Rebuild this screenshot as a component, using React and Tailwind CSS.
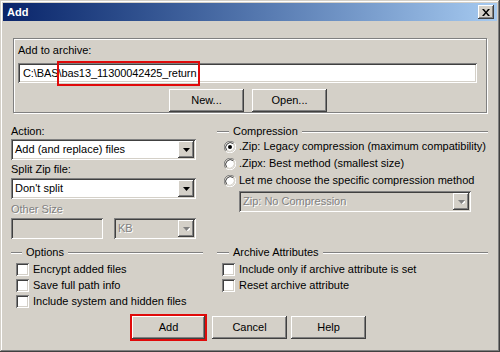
const raised =
  'shadow-[inset_-1px_-1px_#404040,inset_1px_1px_#ffffff,inset_-2px_-2px_#808080,inset_2px_2px_#d4d0c8]';
const sunken =
  'shadow-[inset_1px_1px_#808080,inset_-1px_-1px_#ffffff,inset_2px_2px_#404040,inset_-2px_-2px_#d4d0c8]';
const grayText = 'text-[#808080] [text-shadow:1px_1px_0_#ffffff]';

function Arrow({ disabled }) {
  return (
    <div className={`flex h-[17px] w-[16px] shrink-0 items-center justify-center bg-[#d4d0c8] ${raised}`}>
      <svg width="7" height="4" viewBox="0 0 7 4">
        {disabled && <path d="M1 1h7L4.5 5z" fill="#ffffff" />}
        <path d="M0 0h7L3.5 4z" fill={disabled ? '#808080' : '#000000'} />
      </svg>
    </div>
  );
}

function Select({ value, className, disabled }) {
  return (
    <div
      className={`flex h-[21px] items-center p-[2px] ${sunken} ${disabled ? 'bg-[#d4d0c8]' : 'bg-white'} ${className}`}
    >
      <span className={`flex-1 truncate pl-[2px] ${disabled ? grayText : ''}`}>{value}</span>
      <Arrow disabled={disabled} />
    </div>
  );
}

function Button({ children, className }) {
  return (
    <div className={`flex h-[23px] items-center justify-center bg-[#d4d0c8] ${raised} ${className}`}>
      {children}
    </div>
  );
}

function Header({ label, lead }) {
  return (
    <div className="flex h-[13px] items-center">
      <div className={`h-[2px] border-t border-b border-t-[#808080] border-b-white ${lead}`} />
      <span className="px-[4px]">{label}</span>
      <div className="h-[2px] flex-1 border-t border-b border-t-[#808080] border-b-white" />
    </div>
  );
}

function Radio({ checked, label }) {
  return (
    <div className="flex h-[17px] items-center pl-[7px]">
      <svg width="12" height="12" viewBox="0 0 12 12" className="shrink-0">
        <path d="M10.24 1.76A6 6 0 0 0 1.76 10.24" stroke="#808080" fill="none" />
        <path d="M1.76 10.24A6 6 0 0 0 10.24 1.76" stroke="#ffffff" fill="none" />
        <circle cx="6" cy="6" r="4.6" fill="#ffffff" />
        <path d="M9.3 2.7A4.7 4.7 0 0 0 2.7 9.3" stroke="#404040" fill="none" />
        <path d="M2.7 9.3A4.7 4.7 0 0 0 9.3 2.7" stroke="#d4d0c8" fill="none" />
        {checked && <circle cx="6" cy="6" r="2" fill="#000000" />}
      </svg>
      <span className="pl-[3px]">{label}</span>
    </div>
  );
}

function Check({ label }) {
  return (
    <div className="flex h-[16px] items-center pl-[5px]">
      <div className={`h-[13px] w-[13px] shrink-0 bg-white ${sunken}`} />
      <span className="pl-[4px]">{label}</span>
    </div>
  );
}

export default function App() {
  return (
    <div
      className={`h-[352px] w-[500px] overflow-hidden bg-[#d4d0c8] font-['Liberation_Sans',Arial,sans-serif] text-[11px] leading-[13px] text-black shadow-[inset_-1px_-1px_#404040,inset_1px_1px_#d4d0c8,inset_-2px_-2px_#808080,inset_2px_2px_#ffffff]`}
    >
      {/* Title bar */}
      <div className="px-[3px] pt-[3px]">
        <div className="flex h-[18px] items-center justify-between bg-linear-to-r from-[#0a246a] to-[#a6caf0] pl-[4px] pr-[3px]">
          <span className="font-bold text-white">Add</span>
          <div className={`flex h-[14px] w-[16px] items-center justify-center bg-[#d4d0c8] ${raised}`}>
            <svg width="8" height="7" viewBox="0 0 8 7">
              <path d="M0 0h2l2 2.5L6 0h2L5 3.5 8 7H6L4 4.5 2 7H0l3-3.5z" fill="#000000" />
            </svg>
          </div>
        </div>
      </div>

      {/* Add to archive */}
      <div className="px-[13px] pt-[17px]">
        <div className="h-[75px] w-[474px] border border-[#808080] shadow-[inset_1px_1px_#ffffff,1px_1px_#ffffff] pl-[4px] pt-[5px]">
          <div>Add to archive:</div>
          <div className={`relative mt-[6px] flex h-[20px] w-[459px] items-center bg-white pl-[5px] ${sunken}`}>
            <span className="whitespace-nowrap tracking-[-0.1px]">C:\BAS\bas13_11300042425_return</span>
            <div className="absolute left-[39px] top-[-2px] h-[25px] w-[143px] border-2 border-[#e00a0a]" />
          </div>
          <div className="mt-[6px] flex justify-center gap-[8px] pr-[8px]">
            <Button className="w-[75px]">New...</Button>
            <Button className="w-[75px]">Open...</Button>
          </div>
        </div>
      </div>

      {/* Action / Compression */}
      <div className="grid grid-cols-[192px_271px] gap-x-[14px] pl-[11px] pt-[12px]">
        <div>
          <div>Action:</div>
          <Select className="mt-[1px] w-[185px]" value="Add (and replace) files" />
          <div className="mt-[3px]">Split Zip file:</div>
          <Select className="mt-[2px] w-[185px]" value="Don't split" />
          <div className={`mt-[4px] ${grayText}`}>Other Size</div>
          <div className="mt-[2px] flex w-[185px] gap-[11px]">
            <div className={`h-[21px] w-[92px] bg-[#d4d0c8] ${sunken}`} />
            <Select className="w-[82px]" value="KB" disabled />
          </div>
        </div>
        <div>
          <Header label="Compression" lead="w-[12px]" />
          <Radio checked label=".Zip: Legacy compression (maximum compatibility)" />
          <Radio label=".Zipx: Best method (smallest size)" />
          <Radio label="Let me choose the specific compression method" />
          <Select className="ml-[22px] mt-[2px] w-[232px]" value="Zip: No Compression" disabled />
        </div>
      </div>

      {/* Options / Archive Attributes */}
      <div className="grid grid-cols-[192px_271px] gap-x-[14px] pl-[11px] pt-[7px]">
        <div>
          <Header label="Options" lead="w-[11px]" />
          <div className="pt-[2px]">
            <Check label="Encrypt added files" />
            <Check label="Save full path info" />
            <Check label="Include system and hidden files" />
          </div>
        </div>
        <div>
          <Header label="Archive Attributes" lead="w-[12px]" />
          <div className="pt-[2px]">
            <Check label="Include only if archive attribute is set" />
            <Check label="Reset archive attribute" />
          </div>
        </div>
      </div>

      {/* Buttons */}
      <div className="flex pl-[132px] pt-[7px]">
        <Button className="w-[73px] outline-2 outline-[#e00a0a]">Add</Button>
        <Button className="ml-[7px] w-[75px]">Cancel</Button>
        <Button className="ml-[4px] w-[75px]">Help</Button>
      </div>
    </div>
  );
}
